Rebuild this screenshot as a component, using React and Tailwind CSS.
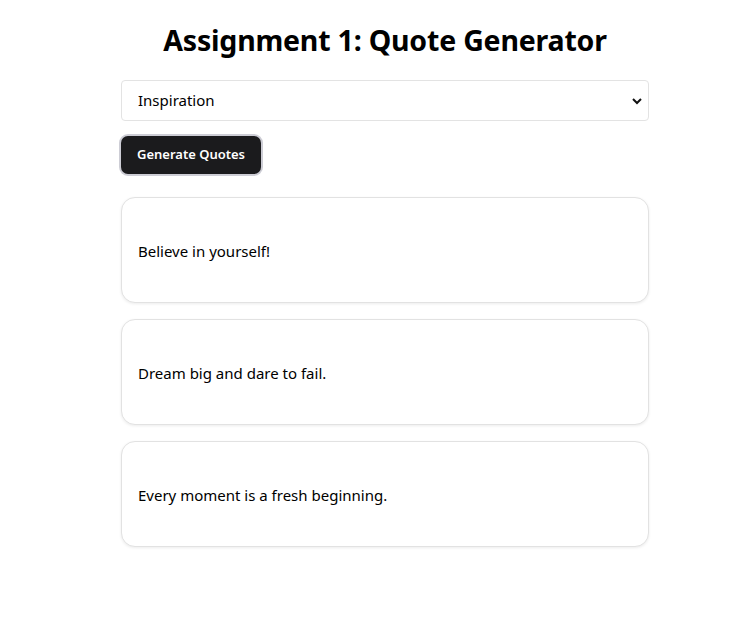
const quotes = [
  "Believe in yourself!",
  "Dream big and dare to fail.",
  "Every moment is a fresh beginning.",
];

export default function App() {
  return (
    <div
      className="min-h-screen bg-white pl-[18px] text-black"
      style={{ fontFamily: '"Noto Sans", sans-serif' }}
    >
      <div className="mx-auto w-[528px] pt-[20px]">
        <h1 className="text-center text-[28.5px] font-bold leading-[40px] tracking-[-0.2px]">
          Assignment 1: Quote Generator
        </h1>

        {/* category select */}
        <div className="relative mt-[20px]">
          <select className="h-[41px] w-full appearance-none rounded-[4px] border border-[#e3e3e3] bg-white pl-[16px] text-[15px] outline-none">
            <option>Inspiration</option>
            <option>Motivation</option>
            <option>Success</option>
          </select>
          <svg
            className="pointer-events-none absolute right-[7px] top-[17px]"
            width="10"
            height="8"
            viewBox="0 0 10 8"
          >
            <path d="M1 2l4 4 4-4" fill="none" stroke="#111" strokeWidth="2" />
          </svg>
        </div>

        <button className="mt-[15px] h-[38px] rounded-[7px] bg-[#1b1b1d] px-[16px] text-[13px] font-semibold text-white ring-2 ring-[#cdcdd5]">
          Generate Quotes
        </button>

        <div className="mt-[23px] flex flex-col gap-[16px]">
          {quotes.map((q, i) => (
            <div
              key={i}
              className="flex h-[106px] items-center rounded-[14px] border border-[#e2e2e2] bg-white px-[16px] pt-[2px] text-[15px] shadow-[0_1px_3px_rgba(0,0,0,0.08)]"
            >
              {q}
            </div>
          ))}
        </div>
      </div>
    </div>
  );
}
